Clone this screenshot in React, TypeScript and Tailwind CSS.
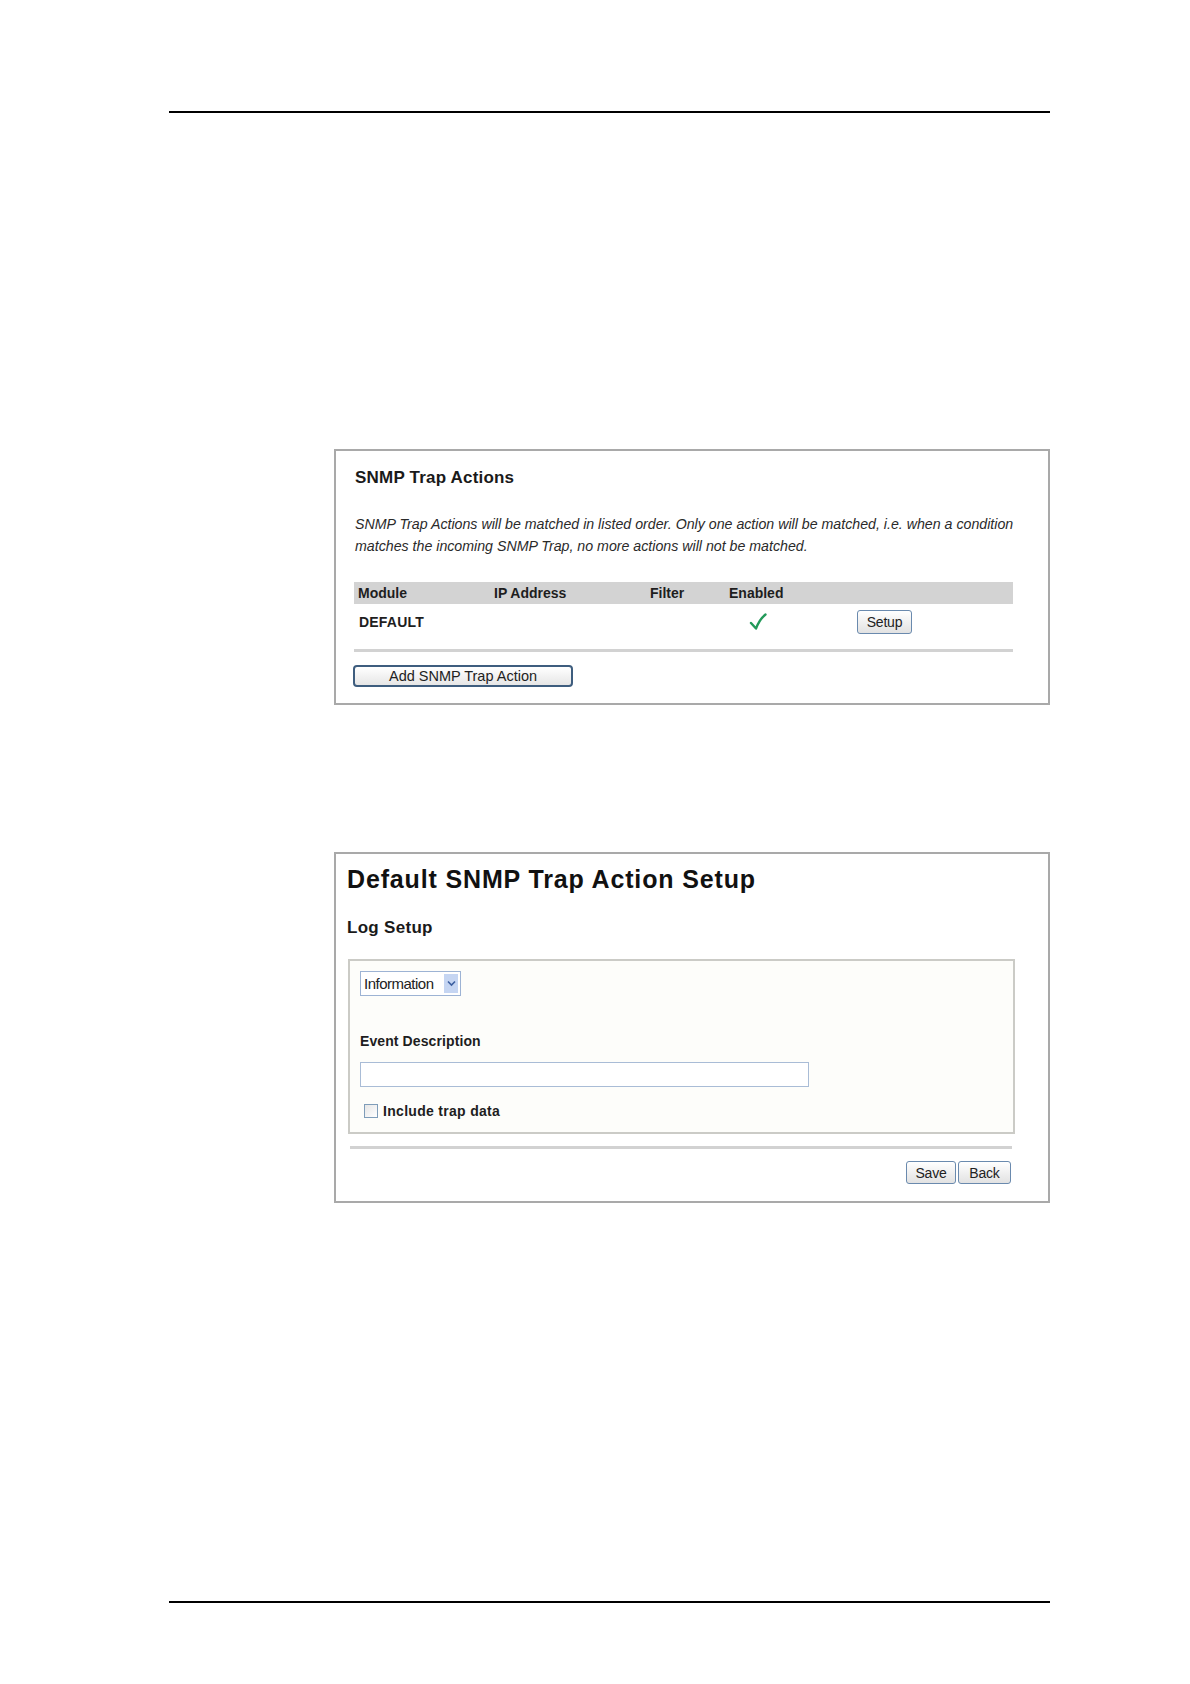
import React from 'react';

const sans = "font-['Liberation_Sans',Arial,sans-serif]";

function Btn({ label, className }: { label: string; className: string }) {
  return (
    <button
      className={`flex items-center justify-center rounded-[3px] border border-[#6a8aae] bg-gradient-to-b from-white to-[#e2e2e2] text-[14px] font-normal leading-none tracking-[-0.2px] text-[#222] ${className}`}
    >
      {label}
    </button>
  );
}

function Check() {
  return (
    <svg width="18" height="18" viewBox="0 0 18 18">
      <path d="M2 10 L7 15.5 C9.5 9 12.5 4.5 16.5 1.5" fill="none" stroke="#239a5a" strokeWidth="2.4" strokeLinecap="round" strokeLinejoin="round" />
    </svg>
  );
}

export default function App() {
  return (
    <div className={`min-h-[1684px] w-[1190px] bg-white ${sans}`}>
      <div className="ml-[169px] w-[881px] pt-[111px]">
        {/* header rule */}
        <div className="h-[2px] bg-black" />

        {/* SNMP Trap Actions panel */}
        <div className="ml-[165px] mt-[336px] w-[716px] border-2 border-[#a9a9a9] pl-[19px] pr-[35px] pt-[17px] pb-[16px]">
          <h2 className="text-[17px] font-bold leading-[20px] tracking-[0.2px] text-[#1a1a1a]">SNMP Trap Actions</h2>
          <p className="mt-[25px] whitespace-nowrap text-[14.2px] italic leading-[22px] text-[#2a2a2a]">
            SNMP Trap Actions will be matched in listed order. Only one action will be matched, i.e. when a condition
            <br />
            matches the incoming SNMP Trap, no more actions will not be matched.
          </p>

          <div className="-ml-px mt-[25px] w-[659px]">
            <div className="grid h-[22px] grid-cols-[136px_156px_79px_128px_1fr] items-center bg-[#d3d3d3] pl-[4px] text-[14px] font-bold text-[#1e1e1e]">
              <span>Module</span>
              <span>IP Address</span>
              <span>Filter</span>
              <span>Enabled</span>
              <span />
            </div>
            <div className="grid h-[36px] grid-cols-[136px_156px_79px_128px_1fr] items-center pl-[5px] text-[14px] font-bold text-[#1e1e1e]">
              <span className="tracking-[0.2px]">DEFAULT</span>
              <span />
              <span />
              <span className="pl-[19px]">
                <Check />
              </span>
              <span className="-ml-px">
                <Btn label="Setup" className="h-[24px] w-[55px]" />
              </span>
            </div>
            <div className="mt-[9px] h-[3px] bg-[#d2d2d2]" />
          </div>

          <button className="-ml-[2px] mt-[13px] flex h-[22px] w-[220px] items-center justify-center rounded-[4px] border-2 border-[#3e5d7e] bg-gradient-to-b from-white to-[#e6e6e6] text-[14.5px] leading-none text-[#222]">
            Add SNMP Trap Action
          </button>
        </div>

        {/* Default SNMP Trap Action Setup panel */}
        <div className="ml-[165px] mt-[147px] w-[716px] border-2 border-[#a9a9a9] pt-[11px] pb-[17px]">
          <h1 className="pl-[11px] text-[25px] font-bold leading-[28px] tracking-[0.85px] text-[#111]">Default SNMP Trap Action Setup</h1>
          <h3 className="mt-[25px] pl-[11px] text-[17px] font-bold leading-[20px] tracking-[0.3px] text-[#1a1a1a]">Log Setup</h3>

          <div className="ml-[12px] mr-[33px] mt-[21px] border-2 border-[#cbcbc6] bg-[#fdfdfa] px-[10px] pt-[10px] pb-[14px]">
            <div className="flex h-[25px] w-[101px] items-center justify-between border border-[#9db3d4] bg-white pl-[3px] pr-[2px]">
              <span className="text-[15px] leading-none tracking-[-0.5px] text-[#222]">Information</span>
              <span className="flex h-[19px] w-[14px] items-center justify-center bg-[#c5d5f2]">
                <svg width="9" height="7" viewBox="0 0 9 7">
                  <path d="M1 1.5 L4.5 5 L8 1.5" fill="none" stroke="#3c5fa0" strokeWidth="1.6" />
                </svg>
              </span>
            </div>

            <div className="mt-[37px] text-[14px] font-bold leading-[16px] tracking-[0.1px] text-[#1e1e1e]">Event Description</div>
            <div className="mt-[13px] h-[25px] w-[449px] border border-[#a9bcd6] bg-white" />

            <label className="mt-[17px] flex items-center gap-[5px] pl-[4px]">
              <span className="h-[14px] w-[14px] border border-[#7f9db9] bg-gradient-to-br from-[#e6e6e6] to-white" />
              <span className="text-[14px] font-bold leading-[14px] tracking-[0.3px] text-[#1e1e1e]">Include trap data</span>
            </label>
          </div>

          <div className="ml-[14px] mr-[36px] mt-[12px] h-[3px] bg-[#d2d2d2]" />

          <div className="mr-[37px] mt-[12px] flex justify-end gap-[2px]">
            <Btn label="Save" className="h-[23px] w-[50px]" />
            <Btn label="Back" className="h-[23px] w-[53px]" />
          </div>
        </div>

        {/* footer rule */}
        <div className="mt-[398px] h-[2px] bg-black" />
      </div>
    </div>
  );
}
